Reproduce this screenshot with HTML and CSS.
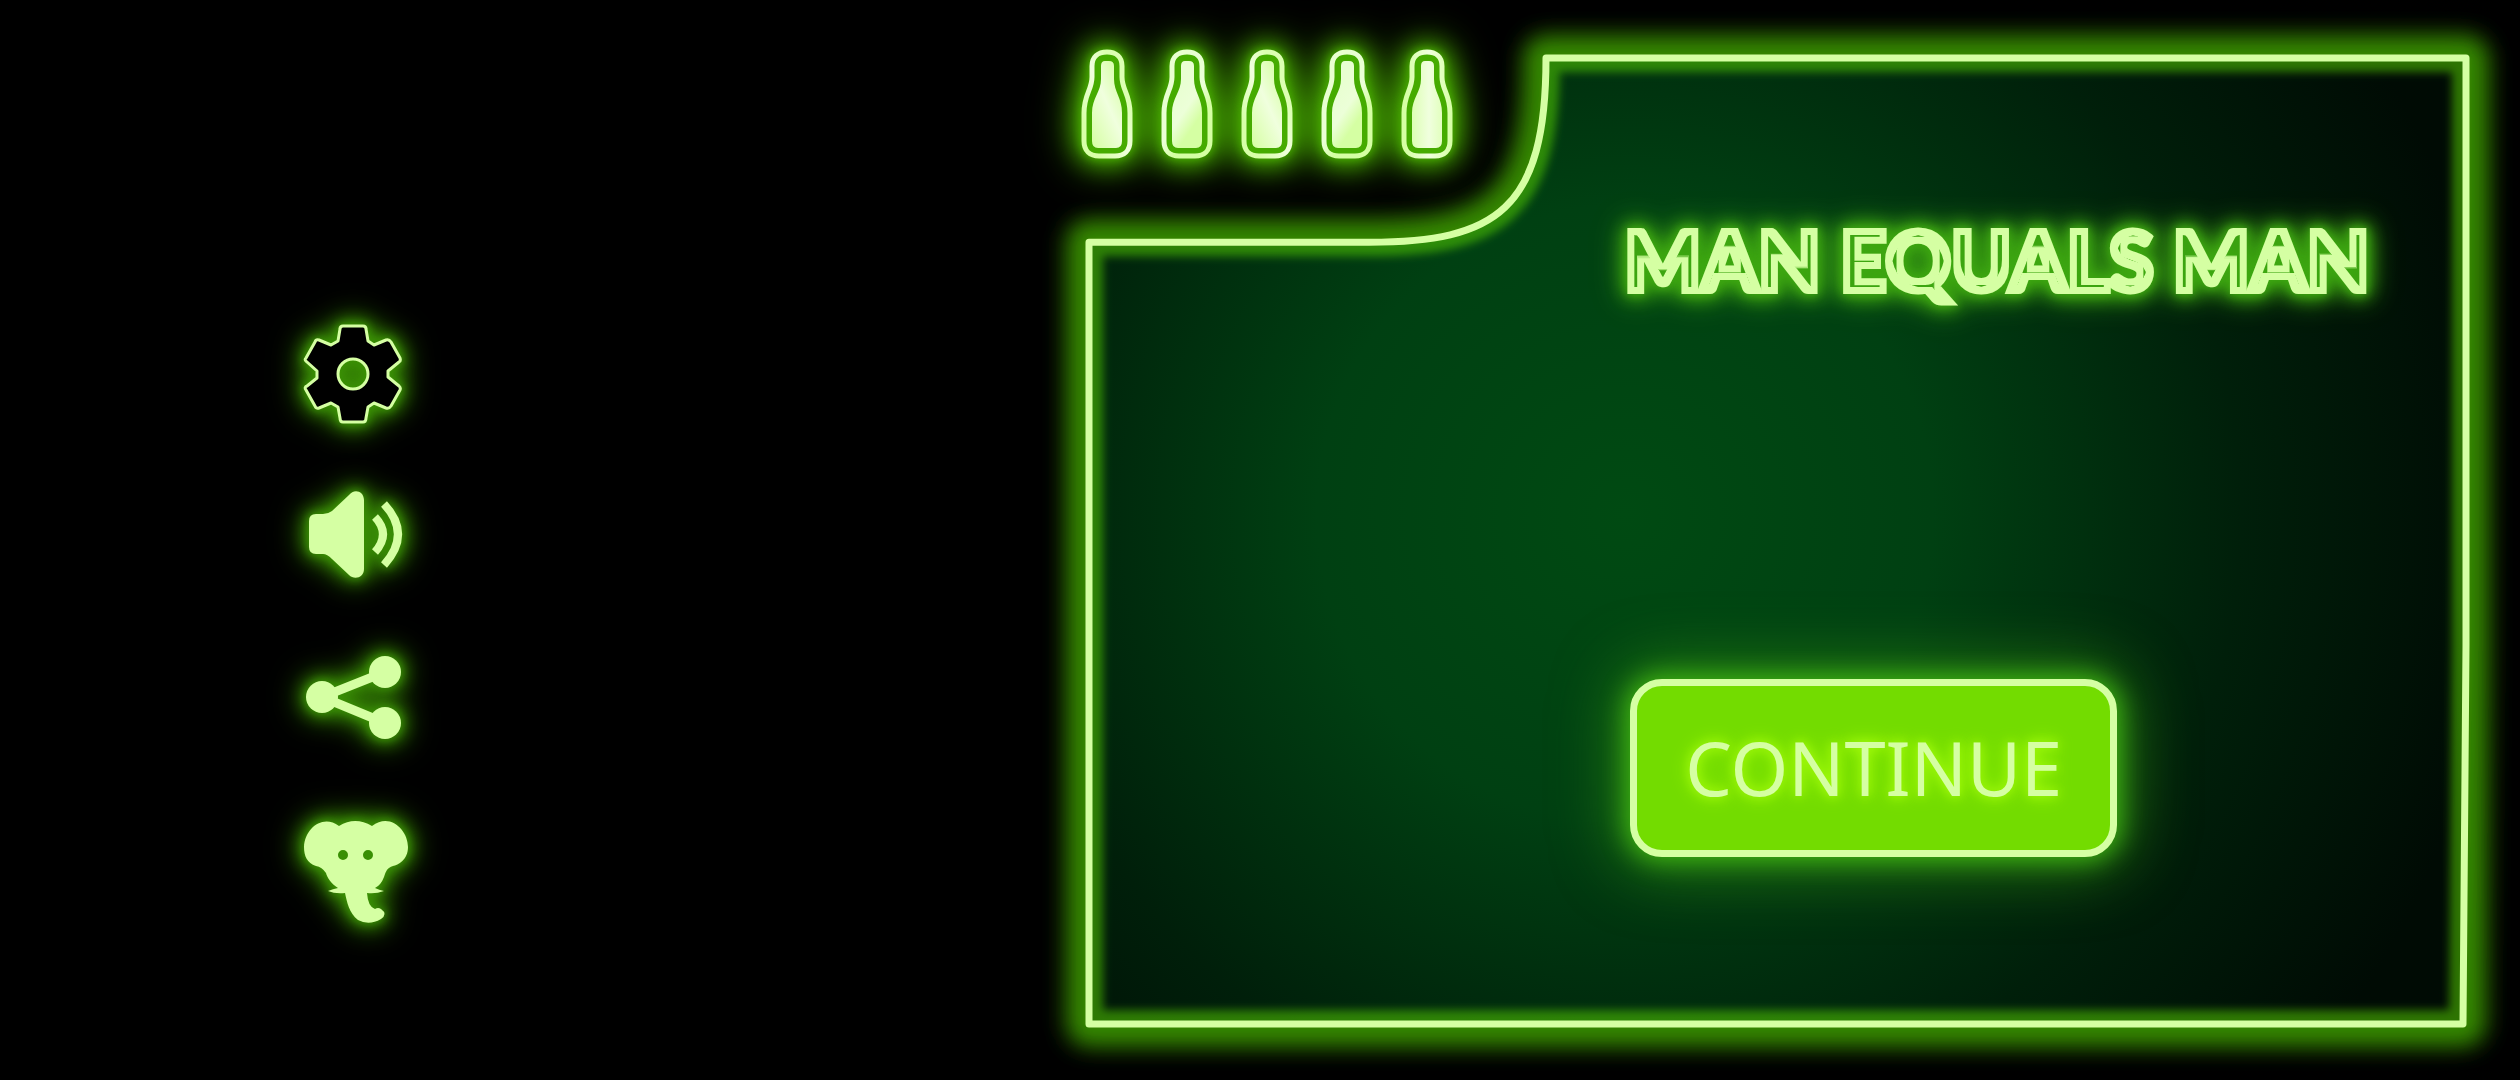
FILE: index.html
```html
<!DOCTYPE html>
<html lang="en">
<head>
<meta charset="utf-8">
<title>Man Equals Man</title>
<meta name="viewport" content="width=device-width, initial-scale=1">
<link rel="stylesheet" href="styles.css">
</head>
<body>
<svg class="defs" width="0" height="0" aria-hidden="true">
  <defs>
    <filter id="inline" x="-5%" y="-5%" width="110%" height="110%" color-interpolation-filters="sRGB">
      <feMorphology in="SourceAlpha" operator="erode" radius="7" result="core"/>
      <feComposite in="SourceGraphic" in2="core" operator="out"/>
    </filter>
    <linearGradient id="shine-a" gradientUnits="userSpaceOnUse" x1="6" y1="80" x2="50" y2="60">
      <stop offset="0" stop-color="#d8ffa8"/><stop offset=".6" stop-color="#f0ffde"/><stop offset="1" stop-color="#dcffb2"/>
    </linearGradient>
    <linearGradient id="shine-b" gradientUnits="userSpaceOnUse" x1="6" y1="50" x2="50" y2="80">
      <stop offset="0" stop-color="#e8ffd0"/><stop offset=".4" stop-color="#ecffd8"/><stop offset=".7" stop-color="#d5ffa3"/>
    </linearGradient>
    <linearGradient id="shine-c" gradientUnits="userSpaceOnUse" x1="4" y1="60" x2="52" y2="60">
      <stop offset="0" stop-color="#d5ffa3"/><stop offset=".5" stop-color="#f0ffde"/><stop offset="1" stop-color="#d5ffa3"/>
    </linearGradient>
    <g id="bottle">
      <path class="glass" stroke-width="5" d="M11 17C11 8 17 3 26 3S41 8 41 17V28C41 41 49 45 49 64V92C49 102 43 107 34 107H18C9 107 3 102 3 92V64C3 45 11 41 11 28Z"/>
      <path stroke="none" d="M20 17Q20 12 24 12H28Q33 12 33 17V30C33 43 41 49 41 64V92Q41 99 35 99H17Q11 99 11 92V64C11 49 20 43 20 30Z"/>
    </g>
  </defs>
</svg>
<main class="screen">
  <nav class="menu" aria-label="Game menu">
    <button class="icon" type="button" aria-label="Settings">
      <svg viewBox="0 0 108 108"><path fill="#000" stroke="#d5ffa3" stroke-width="3" stroke-linejoin="round" fill-rule="evenodd" d="M44 6H64Q67 6 67 9L69 21L75 25L87 20Q90 19 92 22L101 38Q102 41 100 42L89 51V57L100 66Q102 68 101 70L92 86Q90 89 87 88L75 83L69 87L67 98Q67 102 64 102H44Q41 102 41 98L39 87L32 83L20 88Q17 89 16 86L7 70Q5 67 8 66L18 58V51L8 42Q5 40 7 38L16 22Q17 19 20 20L32 25L39 21L41 9Q41 6 44 6ZM54 39A15 15 0 1 0 54 69A15 15 0 1 0 54 39Z"/></svg>
    </button>
    <button class="icon" type="button" aria-label="Sound">
      <svg viewBox="0 0 108 108"><path fill="#d5ffa3" d="M10 38Q10 31 17 31H24Q29 31 33 28L50 12C55 5 65 8 65 17V86C65 95 55 97 50 92L33 76Q28 71 24 71H17Q10 71 10 64Z"/><path fill="none" stroke="#d5ffa3" stroke-width="8" d="M76 34Q92 51 76 69M85 21Q113 51 85 82"/></svg>
    </button>
    <button class="icon" type="button" aria-label="Share">
      <svg viewBox="0 0 108 108"><path fill="none" stroke="#d5ffa3" stroke-width="9" d="M86 26L23 51L86 77"/><g fill="#d5ffa3"><circle cx="86" cy="26" r="16"/><circle cx="23" cy="51" r="16"/><circle cx="86" cy="77" r="16"/></g></svg>
    </button>
    <button class="icon" type="button" aria-label="Elephant">
      <svg viewBox="0 -8 108 108"><path fill="#d5ffa3" fill-rule="evenodd" d="M40 9Q56 -1 73 9C91 -5 109 13 109 30C109 43 99 48 94 49C88 51 87 54 85 60Q82 68 76 71Q80 73 85 74Q77 77 68 76Q69 90 76 92Q79 90 82 92Q89 97 82 102Q70 109 59 103C50 96 48 85 46 76Q36 77 29 74Q34 72 39 71C32 67 28 60 27 56Q23 50 17 49C8 46 5 39 5 30C6 11 24 -3 40 9ZM44 33A5 5 0 1 0 44 43A5 5 0 1 0 44 33ZM69 33A5 5 0 1 0 69 43A5 5 0 1 0 69 33Z"/></svg>
    </button>
  </nav>
  <section class="board">
    <svg class="frame" viewBox="0 0 1386 972" preserveAspectRatio="none" aria-hidden="true">
      <defs>
        <radialGradient id="glow" gradientUnits="userSpaceOnUse" cx="541" cy="458" r="880">
          <stop offset="0" stop-color="#004a12"/><stop offset=".35" stop-color="#004012"/><stop offset=".7" stop-color="#001f0a"/><stop offset="1" stop-color="#000b04"/>
        </radialGradient>
        <path id="edge" d="M5 187H285C412 187 462 155 462 3H1382V590L1379 968H5Z"/>
        <clipPath id="inside"><use href="#edge"/></clipPath>
        <filter id="soft" x="-10%" y="-10%" width="120%" height="120%"><feGaussianBlur stdDeviation="4"/></filter>
        <filter id="halo" x="-10%" y="-10%" width="120%" height="120%"><feGaussianBlur stdDeviation="11"/></filter>
      </defs>
      <use href="#edge" fill="#358800" stroke="#358800" stroke-width="46" stroke-linejoin="round" filter="url(#halo)"/>
      <use href="#edge" fill="url(#glow)"/>
      <g clip-path="url(#inside)"><use href="#edge" fill="none" stroke="#5adb00" stroke-opacity=".5" stroke-width="28" filter="url(#soft)"/></g>
      <use href="#edge" fill="none" stroke="#d5ffa3" stroke-width="7" stroke-linejoin="round"/>
    </svg>
    <div class="lives" role="img" aria-label="Five bottles left">
      <svg viewBox="0 0 52 110"><use href="#bottle" fill="url(#shine-a)" stroke="url(#shine-a)"/></svg>
      <svg viewBox="0 0 52 110"><use href="#bottle" fill="url(#shine-b)" stroke="url(#shine-b)"/></svg>
      <svg viewBox="0 0 52 110"><use href="#bottle" fill="url(#shine-a)" stroke="url(#shine-a)"/></svg>
      <svg viewBox="0 0 52 110"><use href="#bottle" fill="url(#shine-b)" stroke="url(#shine-b)"/></svg>
      <svg viewBox="0 0 52 110"><use href="#bottle" fill="url(#shine-c)" stroke="url(#shine-c)"/></svg>
    </div>
    <div class="content">
      <h1 class="title">MAN EQUALS MAN</h1>
      <button class="continue" type="button">CONTINUE</button>
    </div>
  </section>
</main>
</body>
</html>
```

FILE: styles.css
```css
* { box-sizing: border-box; }

body {
  margin: 0;
  background: #000;
  color: #d5ffa3;
  font-family: "Noto Sans", sans-serif;
}

.defs { position: absolute; }

button {
  border: 0;
  padding: 0;
  background: none;
  color: inherit;
  font: inherit;
  cursor: pointer;
}

.screen {
  display: grid;
  grid-template-columns: 28fr 15fr 55fr 2fr;
  min-height: 100vh;
  padding: 55px 0 52px;
}

.menu {
  grid-column: 1;
  display: flex;
  flex-direction: column;
  align-items: center;
  align-self: center;
  gap: 55px;
  padding-top: 153px;
}

.icon { width: 108px; height: 108px; }

.icon svg {
  display: block;
  width: 100%;
  height: 100%;
  overflow: visible;
  filter: drop-shadow(0 0 4px #3a9005) drop-shadow(0 0 8px #3a9005) drop-shadow(0 0 14px #3a9005);
}

.board {
  grid-column: 3;
  display: grid;
}

.board > * { grid-area: 1 / 1; }

.frame {
  width: 100%;
  height: 100%;
  overflow: visible;
}

.lives {
  display: flex;
  gap: 28px;
  align-self: start;
  justify-self: start;
  margin: -6px 0 0 -3px;
  filter: drop-shadow(0 0 4px #48ac00) drop-shadow(0 0 12px #48ac00) drop-shadow(0 0 18px #48ac00);
}

.lives svg { width: 52px; height: 110px; }

.glass { fill: #45ab00; }

.content {
  position: relative;
  display: flex;
  flex-direction: column;
  align-items: flex-start;
  padding: 150px 0 0 39%;
}

.title {
  margin: 0;
  font: 900 81px/110px Lato, sans-serif;
  white-space: nowrap;
  -webkit-text-stroke: 6px #d5ffa3;
  filter: url(#inline) drop-shadow(0 0 4px #3da711) drop-shadow(0 0 8px #3da711) drop-shadow(0 0 12px #3da711);
}

.continue {
  margin: 364px 0 0 6px;
  padding: 32px 48px;
  border: 7px solid #d5ffa3;
  border-radius: 32px;
  background: #73dc00;
  font-size: 74px;
  line-height: 100px;
  text-shadow: 0 0 12px #aaff0b, 0 0 20px #a0ff0b;
  box-shadow: 0 0 24px 4px #3fb512, 0 0 60px 16px #3a9c1399;
}
```
